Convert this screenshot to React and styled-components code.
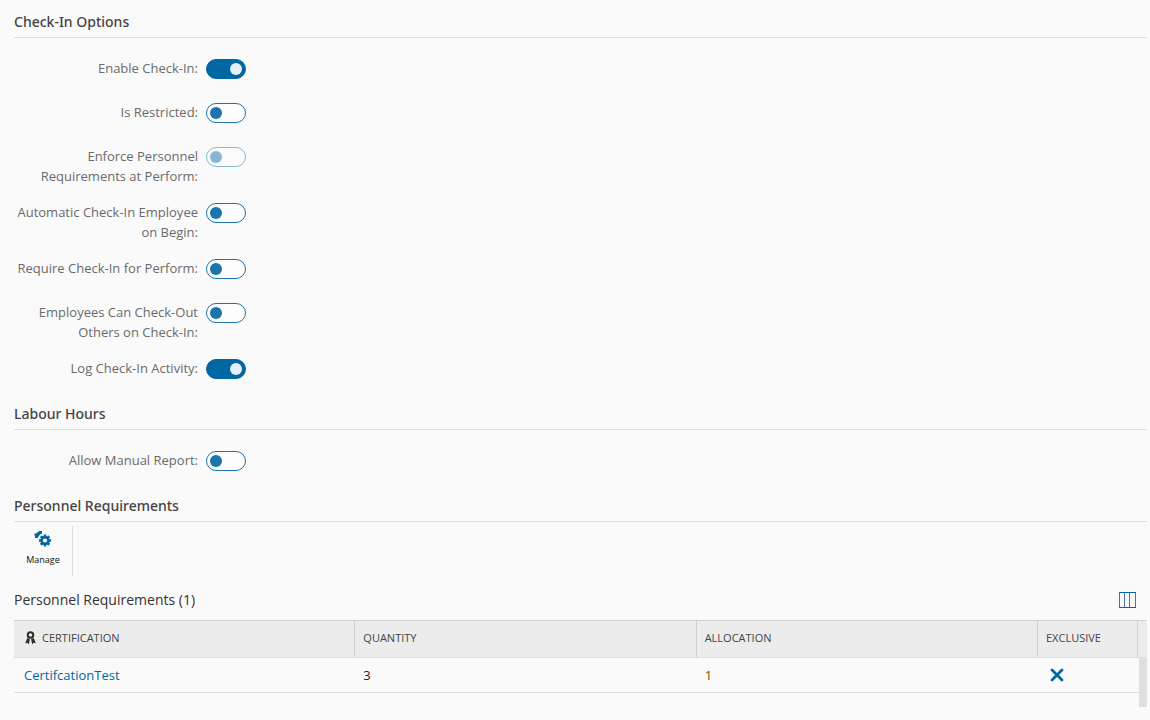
import React, { useState } from "react";
import styled, { createGlobalStyle } from "styled-components";

const GlobalStyle = createGlobalStyle`
  *, *::before, *::after { box-sizing: border-box; }
  body {
    margin: 0;
    background: #fafafa;
    color: #444;
    font-family: "Open Sans", "Noto Sans", sans-serif;
    font-size: 13px;
    line-height: 20px;
  }
`;

const Page = styled.main`
  padding: 7px 3px 13px 14px;
`;

const SectionTitle = styled.h2`
  margin: 0;
  padding: 5px 0;
  border-bottom: 1px solid #dedede;
  font-family: "Noto Sans", "Open Sans", sans-serif;
  font-size: 14px;
  font-weight: 500;
  line-height: 20px;
  color: #444;
`;

const Options = styled.div`
  display: flex;
  flex-direction: column;
  gap: 16px;
  padding: 20px 0 13px;
`;

const OptionRow = styled.div`
  display: flex;
  align-items: flex-start;
  gap: 8px;
  min-height: 28px;
`;

const OptionLabel = styled.label`
  width: 184px;
  text-align: right;
  font-weight: 400;
  color: #6a6a6a;
`;

const Switch = styled.input`
  appearance: none;
  display: flex;
  align-items: center;
  flex: none;
  width: 40px;
  height: 20px;
  margin: 1px 0 0;
  padding: 0 3px;
  border: 1px solid #1a74ad;
  border-radius: 10px;
  background: #fdfdfd;

  &::before {
    content: "";
    width: 12px;
    height: 12px;
    border-radius: 50%;
    background: #1a74ad;
  }
  &:checked {
    justify-content: flex-end;
    border-color: #0067a3;
    background: #0067a3;
  }
  &:checked::before { background: #e6eff6; }
  &:disabled { opacity: 0.5; }
`;

const Toolbar = styled.div`
  display: flex;
  padding: 4px 0;
`;

const ToolButton = styled.button`
  display: flex;
  flex-direction: column;
  align-items: center;
  gap: 2px;
  width: 59px;
  height: 50px;
  padding: 4px 0 0;
  border: 0;
  border-right: 1px solid #dedede;
  background: transparent;
  color: #111;
  font-family: inherit;
  font-size: 9px;
  line-height: 20px;
`;

const GridHeader = styled.div`
  display: flex;
  align-items: center;
  justify-content: space-between;
  height: 40px;
  padding-right: 11px;
`;

const GridTitle = styled.h3`
  margin: 0;
  font-size: 14px;
  font-weight: 500;
  color: #333;
`;

const IconButton = styled.button`
  display: flex;
  padding: 0;
  border: 0;
  background: transparent;
`;

const GridFrame = styled.div`
  position: relative;
  padding-bottom: 14px;
`;

const Table = styled.table`
  width: 100%;
  table-layout: fixed;
  border-collapse: separate;
  border-spacing: 0;
`;

const HeadCell = styled.th`
  width: ${(p) => p.$width || "auto"};
  height: 38px;
  padding: 0;
  border-top: 1px solid #d0d0d0;
  border-bottom: 1px solid #dedede;
  background: #ececec;
  text-align: left;
  font-size: 11px;
  font-weight: 400;
  color: #444;
`;

const HeadLabel = styled.div`
  display: flex;
  align-items: center;
  gap: 6px;
  height: 36px;
  padding: 0 8px 2px ${(p) => (p.$icon ? "11px" : "8px")};
  border-right: 1px solid #d0d0d0;
`;

const Cell = styled.td`
  height: 35px;
  padding: 0 ${(p) => p.$inset || "8px"};
  border-bottom: 1px solid #dedede;
  color: ${(p) => p.$color || "#222"};

  svg { display: block; }
`;

const CellLink = styled.a`
  color: #0067a3;
  text-decoration: none;
`;

const ScrollThumb = styled.div`
  position: absolute;
  top: 37px;
  right: 0;
  bottom: 0;
  width: 8px;
  background: #dfdfdf;
`;

function ManageIcon() {
  return (
    <svg width="18" height="18" viewBox="0 0 18 18" fill="#0067a3" aria-hidden="true">
      <path d="M4.500 1H8v2.500L6 4.500 4.500 6.500 3.500 8H1V5.500H.500V3.500H2.500L3 2.200H4.500z" />
      <g transform="translate(11 10.500)">
        {[0, 45, 90, 135].map((a) => (
          <rect key={a} x="-1.250" y="-6" width="2.500" height="12" transform={`rotate(${a})`} />
        ))}
        <circle r="4.600" />
        <circle r="2.100" fill="#fafafa" />
      </g>
    </svg>
  );
}

function ColumnsIcon() {
  return (
    <svg width="17" height="16" viewBox="0 0 17 16" fill="none" aria-hidden="true">
      <path d="M.5 0v16M5.500 0v16M10.500 0v16M16.500 0v16" stroke="#4a6eb0" />
      <path d="M0 .5h17M0 15.500h17" stroke="#0067a3" />
    </svg>
  );
}

function RibbonIcon() {
  return (
    <svg width="11" height="14" viewBox="0 0 11 14" aria-hidden="true">
      <circle cx="5.500" cy="4" r="2.800" fill="none" stroke="#2b2b2b" strokeWidth="2" />
      <path d="M2.300 7 4.900 8.200 3.800 13.500 2.500 11.800.2 12.300zM8.700 7 6.100 8.200 7.200 13.500 8.500 11.800l2.300.5z" fill="#2b2b2b" />
    </svg>
  );
}

function CrossIcon() {
  return (
    <svg width="14" height="14" viewBox="0 0 14 14" role="img" aria-label="No">
      <path d="M2 2 12 12M12 2 2 12" stroke="#0067a3" strokeWidth="2.800" strokeLinecap="round" />
    </svg>
  );
}

function Option({ id, label, on = false, disabled = false }) {
  const [checked, setChecked] = useState(on);
  return (
    <OptionRow>
      <OptionLabel htmlFor={id}>{`${label}:`}</OptionLabel>
      <Switch
        id={id}
        type="checkbox"
        role="switch"
        checked={checked}
        disabled={disabled}
        onChange={(e) => setChecked(e.target.checked)}
      />
    </OptionRow>
  );
}

export default function App() {
  return (
    <>
      <GlobalStyle />
      <Page>
        <section>
          <SectionTitle>Check-In Options</SectionTitle>
          <Options>
            <Option id="enable" label="Enable Check-In" on />
            <Option id="restricted" label="Is Restricted" />
            <Option id="enforce" label="Enforce Personnel Requirements at Perform" disabled />
            <Option id="automatic" label="Automatic Check-In Employee on Begin" />
            <Option id="require" label="Require Check-In for Perform" />
            <Option id="others" label="Employees Can Check-Out Others on Check-In" />
            <Option id="log" label="Log Check-In Activity" on />
          </Options>
        </section>
        <section>
          <SectionTitle>Labour Hours</SectionTitle>
          <Options>
            <Option id="manual" label="Allow Manual Report" />
          </Options>
        </section>
        <section>
          <SectionTitle>Personnel Requirements</SectionTitle>
          <Toolbar>
            <ToolButton type="button">
              <ManageIcon />
              Manage
            </ToolButton>
          </Toolbar>
          <GridHeader>
            <GridTitle>Personnel Requirements (1)</GridTitle>
            <IconButton type="button" aria-label="Choose columns">
              <ColumnsIcon />
            </IconButton>
          </GridHeader>
          <GridFrame>
            <Table>
              <thead>
                <tr>
                  <HeadCell scope="col">
                    <HeadLabel $icon>
                      <RibbonIcon />
                      CERTIFICATION
                    </HeadLabel>
                  </HeadCell>
                  <HeadCell scope="col"><HeadLabel>QUANTITY</HeadLabel></HeadCell>
                  <HeadCell scope="col"><HeadLabel>ALLOCATION</HeadLabel></HeadCell>
                  <HeadCell scope="col" $width="100px"><HeadLabel>EXCLUSIVE</HeadLabel></HeadCell>
                  <HeadCell as="td" $width="9px" />
                </tr>
              </thead>
              <tbody>
                <tr>
                  <Cell $inset="10px"><CellLink href="#certification">CertifcationTest</CellLink></Cell>
                  <Cell>3</Cell>
                  <Cell $color="#7a4a00">1</Cell>
                  <Cell $inset="12px"><CrossIcon /></Cell>
                  <Cell $inset="0" />
                </tr>
              </tbody>
            </Table>
            <ScrollThumb />
          </GridFrame>
        </section>
      </Page>
    </>
  );
}
